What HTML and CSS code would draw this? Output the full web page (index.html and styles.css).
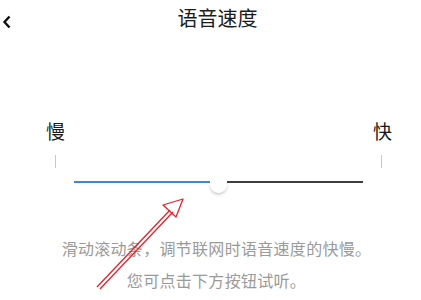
FILE: index.html
```html
<!DOCTYPE html>
<html>
  <head>
    <title>语音速度</title>
    <link rel="stylesheet" href="styles.css">
  </head>
  <body>
    <main class="page">
      <header class="topbar">
        <span class="back">
          <svg width="10" height="14" viewBox="0 0 10 14"><path d="M7.5 1.5 L2.5 7 L7.5 12.5" fill="none" stroke="#111" stroke-width="2.4"/></svg>
        </span>
        <h1>语音速度</h1>
      </header>

      <section class="speed">
        <div class="labels">
          <span>慢</span>
          <span>快</span>
        </div>
        <div class="ticks">
          <i></i>
          <i></i>
        </div>
        <div class="slider">
          <div class="track done"></div>
          <div class="thumb"></div>
          <div class="track rest"></div>
        </div>
      </section>

      <section class="hint">
        <p>滑动滚动条，调节联网时语音速度的快慢。</p>
        <p>您可点击下方按钮试听。</p>
      </section>

      <svg class="arrow" width="421" height="300" viewBox="0 0 421 300">
        <g fill="none" stroke="#e8202a" stroke-width="1.3" stroke-linejoin="round">
          <path d="M97 287 L170 210"/>
          <path d="M100 289 L173 212"/>
          <path d="M163 205 L183 199 L176 217 Z"/>
        </g>
      </svg>
    </main>
  </body>
</html>
```

FILE: styles.css
```css
* {
  font-family: "Noto Sans CJK SC", "Noto Sans", sans-serif;
  box-sizing: border-box;
}
body {
  margin: 0;
  background: #fff;
}
.page {
  position: relative;
  width: 421px;
  height: 300px;
  overflow: hidden;
}
.topbar {
  height: 34px;
  display: flex;
  align-items: center;
  justify-content: center;
  position: relative;
}
.topbar h1 {
  margin: 0 0 0 14px;
  font-size: 20px;
  font-weight: 400;
  color: #1c1c1c;
}
.back {
  position: absolute;
  left: 2px;
  top: 10px;
}
.speed {
  margin-top: 86px;
}
.labels {
  display: flex;
  justify-content: space-between;
  padding: 0 29px 0 46px;
  font-size: 19px;
  line-height: 22px;
  color: #1a1a1a;
}
.ticks {
  display: flex;
  justify-content: space-between;
  padding: 0 39px 0 55px;
  margin-top: 13px;
}
.ticks i {
  display: block;
  width: 1px;
  height: 13px;
  background: #c8c8c8;
}
.slider {
  display: flex;
  align-items: center;
  padding: 0 58px 0 74px;
  margin-top: 5px;
  height: 18px;
}
.track {
  height: 2px;
  flex: 1;
}
.done {
  background: #3b86e3;
}
.rest {
  background: #3d3d3d;
}
.thumb {
  width: 17px;
  height: 17px;
  border-radius: 50%;
  background: #fff;
  box-shadow: 0 2px 3px rgba(0, 0, 0, 0.18);
  margin-top: 4px;
}
.hint {
  margin-top: 41px;
  text-align: center;
  padding-left: 12px;
  color: #9a9a9a;
  font-size: 16px;
  letter-spacing: 0.3px;
}
.hint p {
  margin: 0;
  line-height: 32px;
}
.arrow {
  position: absolute;
  left: 0;
  top: 0;
}
```
